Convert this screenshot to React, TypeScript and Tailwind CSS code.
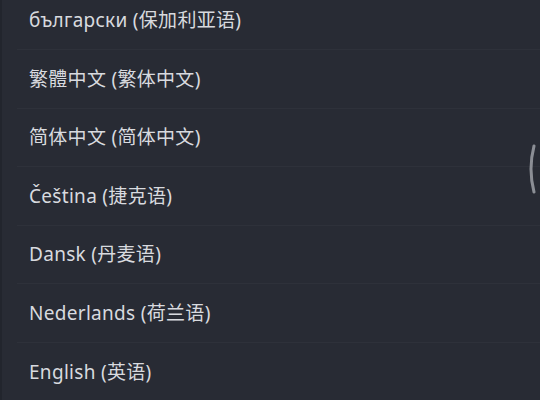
const languages = [
  "български (保加利亚语)",
  "繁體中文 (繁体中文)",
  "简体中文 (简体中文)",
  "Čeština (捷克语)",
  "Dansk (丹麦语)",
  "Nederlands (荷兰语)",
  "English (英语)",
];

export default function App() {
  return (
    <div className="relative h-[400px] w-[540px] overflow-hidden border-l-2 border-[#22252d] bg-[#282b34] font-['Noto_Sans','Noto_Sans_CJK_SC',sans-serif]">
      <ul className="-mt-[9.5px]">
        {languages.map((lang, i) => (
          <li
            key={lang}
            className={`flex h-[58.6px] items-center pl-[27px] text-[19px] tracking-[0.3px] text-[#d8dadf] ${
              i > 0 ? "border-t border-[#2e313a] [border-image:linear-gradient(to_right,transparent_16px,#2e313a_16px)_1]" : ""
            }`}
          >
            {lang}
          </li>
        ))}
      </ul>

      {/* scroll hint arc on the right edge */}
      <svg
        className="absolute left-[525px] top-[144px]"
        width="10"
        height="50"
        viewBox="0 0 10 50"
        fill="none"
      >
        <path
          d="M7 2 Q1 25 7 48"
          stroke="#8b8e95"
          strokeWidth="3"
          strokeLinecap="round"
        />
      </svg>
    </div>
  );
}
